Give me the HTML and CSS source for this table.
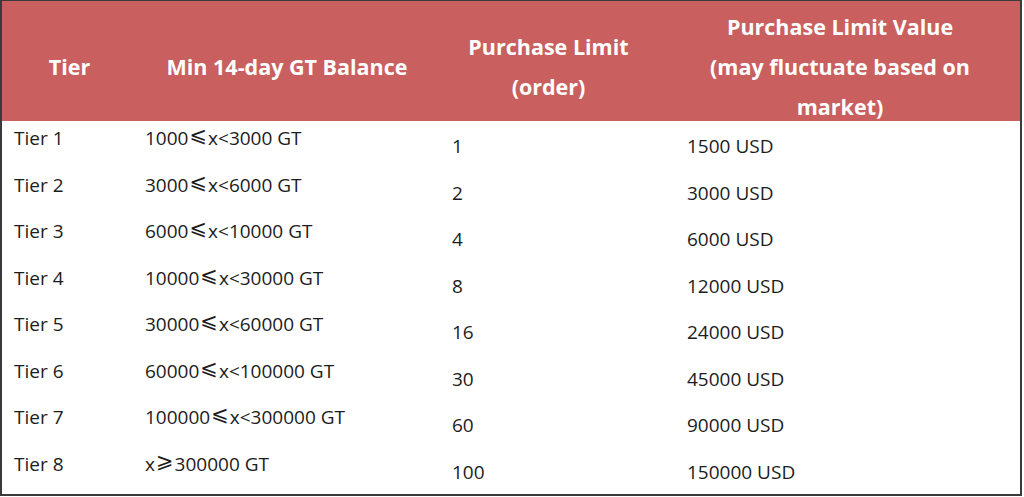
FILE: index.html
```html
<!doctype html>
<html lang="en">
<head>
    <meta charset="UTF-8">
    <title>Tiers</title>
    <link rel="stylesheet" href="styles.css">
</head>
<body>
<div class="frame">
    <table class="tiers">
        <thead>
        <tr>
            <th class="col-tier"><div class="head">Tier</div></th>
            <th class="col-min"><div class="head">Min 14-day GT Balance</div></th>
            <th class="col-limit"><div class="head">Purchase Limit<br>(order)</div></th>
            <th class="col-value"><div class="head">Purchase Limit Value<br>(may fluctuate based on<br>market)</div></th>
        </tr>
        </thead>
        <tbody>
        <tr><td>Tier 1</td><td>1000<span class="rel">⩽</span>x&lt;3000 GT</td><td class="low">1</td><td class="low">1500 USD</td></tr>
        <tr><td>Tier 2</td><td>3000<span class="rel">⩽</span>x&lt;6000 GT</td><td class="low">2</td><td class="low">3000 USD</td></tr>
        <tr><td>Tier 3</td><td>6000<span class="rel">⩽</span>x&lt;10000 GT</td><td class="low">4</td><td class="low">6000 USD</td></tr>
        <tr><td>Tier 4</td><td>10000<span class="rel">⩽</span>x&lt;30000 GT</td><td class="low">8</td><td class="low">12000 USD</td></tr>
        <tr><td>Tier 5</td><td>30000<span class="rel">⩽</span>x&lt;60000 GT</td><td class="low">16</td><td class="low">24000 USD</td></tr>
        <tr><td>Tier 6</td><td>60000<span class="rel">⩽</span>x&lt;100000 GT</td><td class="low">30</td><td class="low">45000 USD</td></tr>
        <tr><td>Tier 7</td><td>100000<span class="rel">⩽</span>x&lt;300000 GT</td><td class="low">60</td><td class="low">90000 USD</td></tr>
        <tr><td>Tier 8</td><td>x<span class="rel">⩾</span>300000 GT</td><td class="low">100</td><td class="low">150000 USD</td></tr>
        </tbody>
    </table>
</div>
</body>
</html>
```

FILE: styles.css
```css
body {
    margin: 0;
    padding: 0;
    background: #fff;
}

.frame {
    width: 1022px;
    height: 496px;
    box-sizing: border-box;
    border: 2px solid #3a3a3a;
    border-top-width: 1px;
    overflow: hidden;
}

.tiers {
    width: 100%;
    border-collapse: collapse;
    table-layout: fixed;
    font-family: "Open Sans", sans-serif;
    font-size: 19px;
    color: #1c1c1c;
}

.tiers th {
    height: 120px;
    padding: 0;
    background: #c95f5e;
    color: #fff;
    font-size: 21.5px;
    font-weight: 700;
    line-height: 40px;
    text-align: center;
    vertical-align: middle;
}

.head {
    margin: 6px 0 -6px;
    white-space: nowrap;
}

.col-tier { width: 135px; }
.col-min { width: 300px; }
.col-limit { width: 223px; }
.col-value { width: 360px; }

.tiers td {
    height: 46.5px;
    box-sizing: border-box;
    padding: 5px 0 0 0;
    vertical-align: top;
    line-height: 24px;
    white-space: nowrap;
}

.tiers td:nth-child(1) { padding-left: 12px; }
.tiers td:nth-child(2) { padding-left: 8px; }
.tiers td:nth-child(3) { padding-left: 15px; }
.tiers td:nth-child(4) { padding-left: 27px; }

.tiers td.low {
    padding-top: 13px;
}

.rel {
    display: inline-block;
    font-family: "DejaVu Sans", sans-serif;
    font-size: 21px;
    line-height: 1;
    transform: translateY(-3px);
    margin: 0 1px;
}
```
